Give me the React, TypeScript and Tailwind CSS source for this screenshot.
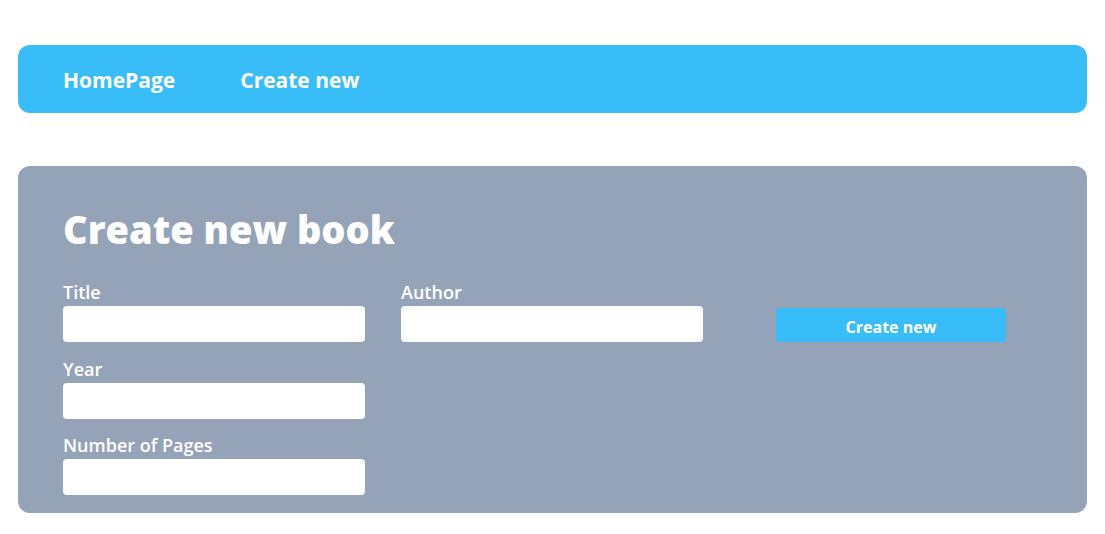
import React from 'react';

const font = { fontFamily: '"Open Sans", "Noto Sans", sans-serif' };

const Field = ({ label, className = '' }: { label: string; className?: string }) => (
  <div className={`flex flex-col ${className}`}>
    <label className="text-[18px] leading-[24px] font-semibold text-white">{label}</label>
    <input type="text" className="mt-[2px] h-[36px] w-[302px] rounded-[4px] bg-white outline-none" />
  </div>
);

const App = () => {
  return (
    <div className="min-h-screen bg-white px-[18px] pt-[45px]" style={font}>
      <nav className="flex h-[68px] items-center gap-[65px] rounded-[12px] bg-[#38bdf8] px-[45px] pt-[3px]">
        <a className="text-[21px] font-bold text-white">HomePage</a>
        <a className="text-[21px] font-bold text-white">Create new</a>
      </nav>

      <div className="mt-[53px] rounded-[12px] bg-[#94a3b8] px-[45px] pt-[37px] pb-[18px]">
        <h1 className="text-[38px] leading-[52px] font-extrabold text-white">Create new book</h1>
        <div className="mt-[25px] flex items-start">
          <div className="flex flex-col">
            <Field label="Title" />
            <Field label="Year" className="mt-[15px]" />
            <Field label="Number of Pages" className="mt-[14px]" />
          </div>
          <div className="ml-[36px]">
            <Field label="Author" />
          </div>
          <button className="ml-[73px] mt-[28px] h-[34px] w-[230px] rounded-[4px] bg-[#38bdf8] pt-[3px] text-[16px] font-bold text-white">
            Create new
          </button>
        </div>
      </div>
    </div>
  );
};

export default App;
